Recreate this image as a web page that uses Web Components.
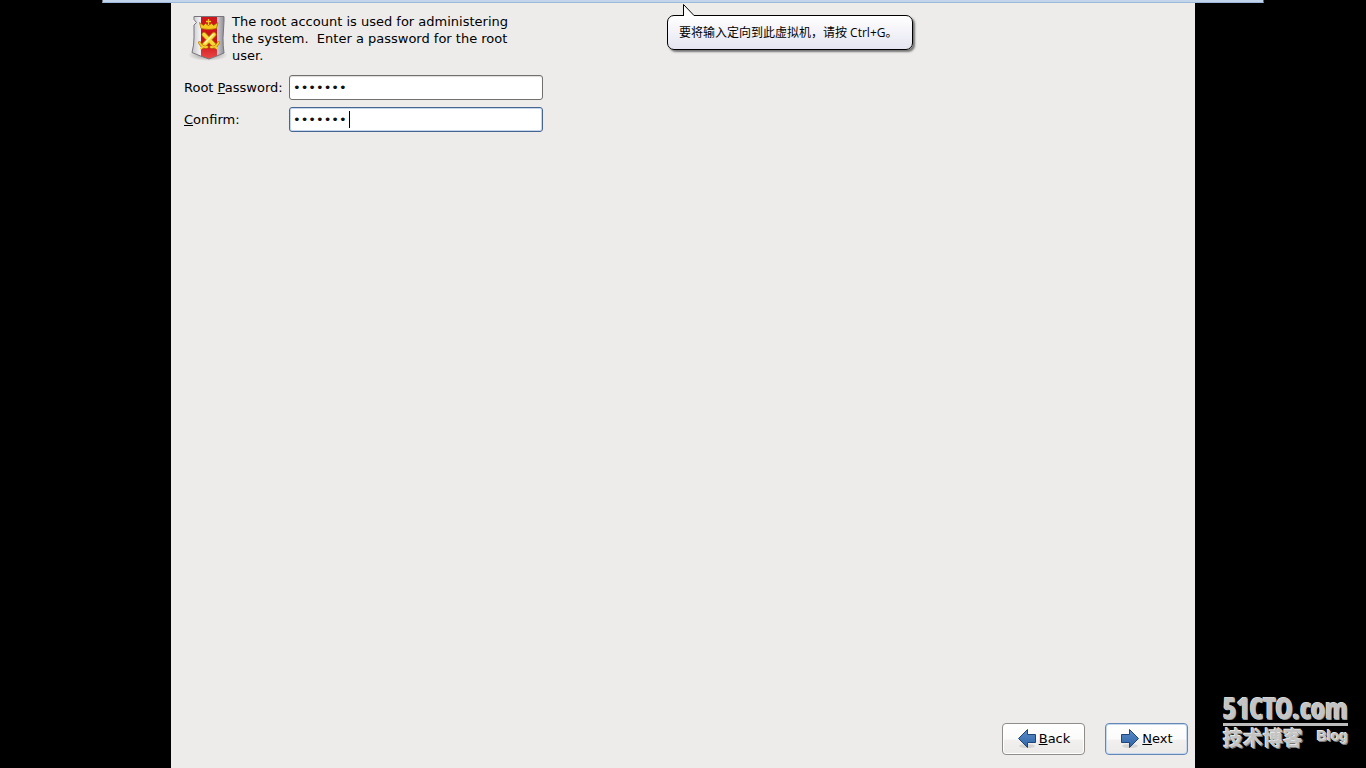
<!DOCTYPE html>
<html lang="en">
<head>
<meta charset="utf-8">
<title>Root password</title>
<style>
    html, body {
        height: 100%;
        margin: 0;
        background: #000;
    }
    body {
        font: 13px/17px "DejaVu Sans", sans-serif;
        color: #000;
        overflow: hidden;
    }
</style>
</head>
<body>
<vm-console>
    <installer-page>
        <intro-text slot="intro">The root account is used for administering the system.&nbsp; Enter a password for the root user.</intro-text>
        <password-field value="abcdefg">Root <u>P</u>assword:</password-field>
        <password-field value="abcdefg" active><u>C</u>onfirm:</password-field>
        <nav-button slot="actions" direction="back"><u>B</u>ack</nav-button>
        <nav-button slot="actions" direction="next" default><u>N</u>ext</nav-button>
    </installer-page>
    <hint-balloon slot="overlay">要将输入定向到此虚拟机，请按 Ctrl+G。</hint-balloon>
    <site-mark slot="mark"></site-mark>
</vm-console>

<script>
class VMConsole extends HTMLElement {
    constructor() {
        super();
        this.attachShadow({mode: 'open'});
    }

    connectedCallback() {
        this.shadowRoot.innerHTML = `
        <style>
            :host {
                display: flex;
                justify-content: center;
                min-height: 100%;
                position: relative;
                background: #000;
            }
            .screen {
                display: flex;
                position: relative;
                width: 100%;
                max-width: 1024px;
            }
            .bar {
                position: absolute;
                top: 0;
                left: 50%;
                width: 85%;
                height: 3px;
                box-sizing: border-box;
                background: #c2d5eb;
                border-bottom: 1px solid #9db8d9;
                transform: translateX(-50%);
            }
            .mark {
                position: absolute;
                right: 18px;
                bottom: 16px;
            }
        </style>
        <div class="screen">
            <slot></slot>
            <slot name="overlay"></slot>
        </div>
        <div class="bar"></div>
        <div class="mark"><slot name="mark"></slot></div>
        `;
    }
}
customElements.define("vm-console", VMConsole);

class InstallerPage extends HTMLElement {
    constructor() {
        super();
        this.attachShadow({mode: 'open'});
    }

    connectedCallback() {
        this.shadowRoot.innerHTML = `
        <style>
            :host {
                display: flex;
                flex: 1;
                flex-direction: column;
                justify-content: space-between;
                box-sizing: border-box;
                padding: 13px 7px 13px 13px;
                background: #edeceb;
            }
            form {
                display: flex;
                flex-direction: column;
                gap: 7px;
                max-width: 359px;
            }
            footer {
                display: flex;
                justify-content: flex-end;
                gap: 20px;
            }
        </style>
        <form>
            <slot name="intro"></slot>
            <slot></slot>
        </form>
        <footer><slot name="actions"></slot></footer>
        `;
    }
}
customElements.define("installer-page", InstallerPage);

class IntroText extends HTMLElement {
    constructor() {
        super();
        this.attachShadow({mode: 'open'});
    }

    connectedCallback() {
        this.shadowRoot.innerHTML = `
        <style>
            :host {
                display: flex;
                margin-bottom: 4px;
            }
            svg {
                flex: none;
                width: 48px;
                height: 48px;
            }
            p {
                flex: 1;
                max-width: 290px;
                margin: 0;
            }
        </style>
        <svg viewBox="0 0 48 48" aria-hidden="true">
            <defs>
                <linearGradient id="steel" x1="0" y1="0" x2="1" y2="0">
                    <stop offset="0" stop-color="#b9b9be"/>
                    <stop offset=".25" stop-color="#eeeef1"/>
                    <stop offset=".7" stop-color="#d8d5dc"/>
                    <stop offset="1" stop-color="#77757c"/>
                </linearGradient>
                <linearGradient id="red" x1="0" y1="0" x2="0" y2="1">
                    <stop offset="0" stop-color="#d0181c"/>
                    <stop offset=".6" stop-color="#cb1216"/>
                    <stop offset="1" stop-color="#f0504c"/>
                </linearGradient>
                <radialGradient id="shade">
                    <stop offset="0" stop-color="#000" stop-opacity=".4"/>
                    <stop offset="1" stop-color="#000" stop-opacity="0"/>
                </radialGradient>
                <clipPath id="body">
                    <path d="M10 3.5H40V8L39 25Q39 33 40 40Q33 43 25 46Q16 43 8 39.500Q10 32 10 25V12L12.500 9.500L10 6.500Z"/>
                </clipPath>
            </defs>
            <ellipse cx="24" cy="42" rx="20" ry="6" fill="url(#shade)"/>
            <g clip-path="url(#body)">
                <path d="M6 2H43V48H6Z" fill="url(#steel)"/>
                <path d="M17 2H33V48H17Z" fill="url(#red)"/>
            </g>
            <path d="M10 3.500H40V8L39 25Q39 33 40 40Q33 43 25 46Q16 43 8 39.500Q10 32 10 25V12L12.500 9.500L10 6.500Z" fill="none" stroke="#77757b"/>
            <path d="M15.500 9.500L19.500 12.500L21.500 10.500L24.500 12.500L27.500 10.500L29.500 12.500L34 9.500L32.500 15.500Q25 17.500 17 15.500Z" fill="#f6c91c" stroke="#a86b08" stroke-width=".7"/>
            <path d="M24.500 6V12M22 8.500H27" stroke="#f6c91c" stroke-width="1.300"/>
            <g stroke-linecap="round" fill="none">
                <path d="M20 21.500L31 33M30 21.500L19 33" stroke="#b87808" stroke-width="5"/>
                <path d="M20 21.500L31 33M30 21.500L19 33" stroke="#f8d83c" stroke-width="3.400"/>
                <path d="M29 21.500L21 30" stroke="#fff6b0" stroke-width="1.400"/>
                <path d="M15.500 29.500Q18 35 23 34M34.500 29.500Q32 35 27 34" stroke="#b87808" stroke-width="3"/>
                <path d="M15.500 29.500Q18 35 23 34M34.500 29.500Q32 35 27 34M17 35.500L19 33.500M33 35.500L31 33.500" stroke="#f5cd2a" stroke-width="1.800"/>
            </g>
        </svg>
        <p><slot></slot></p>
        `;
    }
}
customElements.define("intro-text", IntroText);

class PasswordField extends HTMLElement {
    constructor() {
        super();
        this.attachShadow({mode: 'open'});
    }

    connectedCallback() {
        this.shadowRoot.innerHTML = `
        <style>
            :host {
                display: flex;
                align-items: center;
            }
            label {
                flex: none;
                width: 105px;
            }
            .box {
                display: flex;
                flex: 1;
                position: relative;
            }
            input {
                flex: 1;
                min-width: 0;
                height: 25px;
                box-sizing: border-box;
                padding: 0 3px;
                border: 1px solid #72706c;
                border-radius: 3px;
                outline: none;
                background: #fff;
                box-shadow: inset 0 1px 1px #dddcda;
                color: #111;
                caret-color: transparent;
                font: inherit;
            }
            .caret {
                display: none;
                position: absolute;
                left: 60px;
                top: 4px;
                width: 1px;
                height: 17px;
                background: #000;
            }
            :host([active]) input {
                border-color: #46658f;
                box-shadow: inset 0 0 0 1px #c3d6ee;
            }
            :host([active]) .caret {
                display: block;
            }
        </style>
        <label for="field"><slot></slot></label>
        <div class="box">
            <input id="field" type="password" autocomplete="off">
            <span class="caret"></span>
        </div>
        `;
        this._input = this.shadowRoot.querySelector('#field');
        this._input.value = this.getAttribute('value') || "";
    }
}
customElements.define("password-field", PasswordField);

class NavButton extends HTMLElement {
    constructor() {
        super();
        this.attachShadow({mode: 'open'});
    }

    connectedCallback() {
        const back = this.getAttribute('direction') === "back";
        const arrow = back
            ? "M1.500 9.500L10.500 .500V5.500H18.500V13.500H10.500V18.500Z"
            : "M18.500 9.500L9.500 .500V5.500H1.500V13.500H9.500V18.500Z";
        this.shadowRoot.innerHTML = `
        <style>
            :host {
                display: block;
            }
            button {
                display: flex;
                align-items: center;
                gap: 2px;
                height: 32px;
                min-width: 83px;
                box-sizing: border-box;
                justify-content: center;
                padding: 0 12px 2px;
                border: 1px solid #8f8c89;
                border-radius: 4px;
                background: linear-gradient(#fff, #fbfbfa 50%, #f1f0ef 55%, #ebeae8);
                box-shadow: inset 0 0 0 1px #fff;
                color: inherit;
                font: inherit;
            }
            :host([default]) button {
                border-color: #6487b5;
                box-shadow: inset 0 0 0 1px #c5d8ee;
            }
            svg {
                flex: none;
                width: 20px;
                height: 20px;
            }
        </style>
        <button type="button">
            <svg viewBox="0 -1 20 20" aria-hidden="true">
                <defs>
                    <linearGradient id="blue" x1="0" y1="0" x2="0" y2="1">
                        <stop offset="0" stop-color="#5b8cc7"/>
                        <stop offset="1" stop-color="#2e63a5"/>
                    </linearGradient>
                </defs>
                <ellipse cx="10" cy="17" rx="8" ry="2" fill="#000" opacity=".1"/>
                <path d="${arrow}" fill="url(#blue)" stroke="#1f4478" stroke-linejoin="round"/>
            </svg>
            <span><slot></slot></span>
        </button>
        `;
    }
}
customElements.define("nav-button", NavButton);

class HintBalloon extends HTMLElement {
    constructor() {
        super();
        this.attachShadow({mode: 'open'});
    }

    connectedCallback() {
        this.shadowRoot.innerHTML = `
        <style>
            :host {
                display: block;
                position: absolute;
                left: 496px;
                top: 15px;
            }
            .balloon {
                box-sizing: border-box;
                height: 35px;
                padding: 8px 15px 8px 11px;
                border: 1px solid #000;
                border-radius: 7px;
                background: linear-gradient(#fff, #e5e5f1);
                box-shadow: 2px 2px 2px #777;
                font: 12px/17px "Open Sans", "Noto Sans CJK SC", sans-serif;
                white-space: nowrap;
            }
            svg {
                position: absolute;
                left: 16px;
                top: -11px;
                width: 12px;
                height: 12px;
            }
        </style>
        <div class="balloon" lang="zh-CN"><slot></slot></div>
        <svg viewBox="0 0 12 12" aria-hidden="true">
            <path d="M.5 12V.5L11 11.500V12Z" fill="#fff"/>
            <path d="M.5 12V.5L11 11.500" fill="none" stroke="#000"/>
        </svg>
        `;
    }
}
customElements.define("hint-balloon", HintBalloon);

class SiteMark extends HTMLElement {
    constructor() {
        super();
        this.attachShadow({mode: 'open'});
    }

    connectedCallback() {
        this.shadowRoot.innerHTML = `
        <style>
            :host {
                display: block;
                width: 125px;
                color: #c4c4c4;
                text-shadow: -1px -1px #e6e6e6, 1px 1px #777;
                white-space: nowrap;
            }
            .name {
                border-bottom: 3px solid #bdbdbd;
                font: bold 29px/30px "Liberation Sans Narrow", "Open Sans Condensed", "Liberation Sans", sans-serif;
                -webkit-text-stroke: 1px #c4c4c4;
            }
            .sub {
                display: flex;
                justify-content: space-between;
                align-items: flex-start;
                font: bold 20px/26px "Liberation Sans", "Noto Sans CJK SC", sans-serif;
            }
            .blog {
                font: bold 14px/20px "Liberation Sans", sans-serif;
            }
        </style>
        <div class="name">51CTO.com</div>
        <div class="sub"><span lang="zh-CN">技术博客</span><span class="blog">Blog</span></div>
        `;
    }
}
customElements.define("site-mark", SiteMark);
</script>
</body>
</html>
